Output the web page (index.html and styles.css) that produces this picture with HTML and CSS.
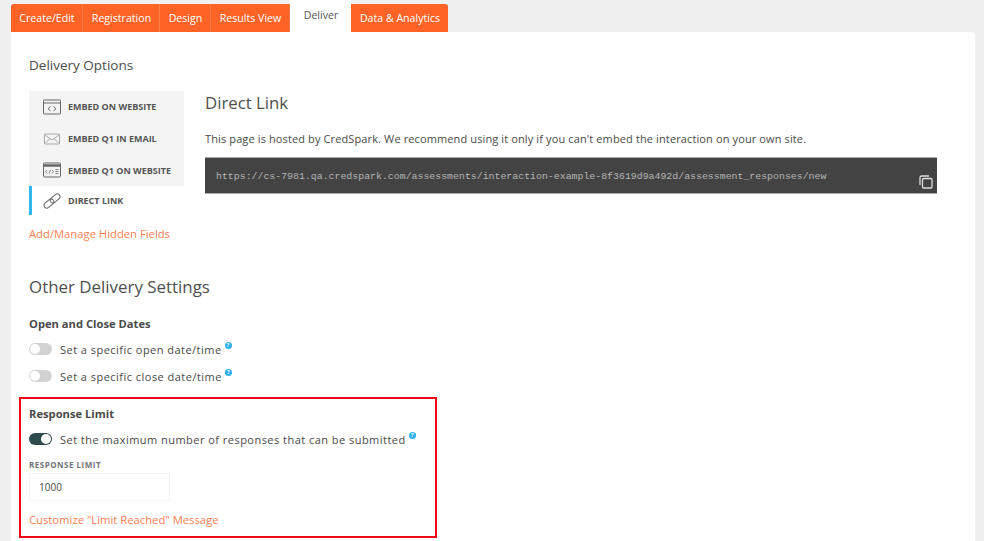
FILE: index.html
```html
<!DOCTYPE html>
<html lang="en">
<head>
    <meta charset="UTF-8">
    <meta name="viewport" content="width=device-width, initial-scale=1.0">
    <title>Deliver</title>
    <link rel="stylesheet" href="styles.css">
</head>
<body>
    <nav class="tabs">
        <a class="tab tab-first" style="width: 72px">Create/Edit</a>
        <a class="tab" style="width: 77px">Registration</a>
        <a class="tab" style="width: 51px">Design</a>
        <a class="tab" style="width: 79px">Results View</a>
        <a class="tab tab-active" style="width: 61px">Deliver</a>
        <a class="tab tab-last" style="width: 97px">Data &amp; Analytics</a>
    </nav>

    <main class="card">
        <h3 class="section-title">Delivery Options</h3>

        <div class="options">
            <div class="side">
                <div class="side-group">
                    <div class="side-item">
                        <svg class="side-icon" width="20" height="16" viewBox="0 0 20 16" fill="none" stroke="#666" stroke-width="1">
                            <rect x="1.5" y="1" width="17" height="14" rx="1"/>
                            <path d="M1.5 4h17M8.5 7.5l-2.5 2.2 2.5 2.2M11.5 7.5l2.5 2.2-2.5 2.2"/>
                        </svg>
                        <span>EMBED ON WEBSITE</span>
                    </div>
                    <div class="side-item">
                        <svg class="side-icon" width="20" height="16" viewBox="0 0 20 16" fill="none" stroke="#a8a8a8" stroke-width="1">
                            <rect x="2.5" y="3" width="15" height="10" rx="1"/>
                            <path d="M3 4l7 5 7-5M3 12.5l5-5M17 12.5l-5-5"/>
                        </svg>
                        <span>EMBED Q1 IN EMAIL</span>
                    </div>
                    <div class="side-item">
                        <svg class="side-icon" width="20" height="16" viewBox="0 0 20 16" fill="none" stroke="#666" stroke-width="1">
                            <rect x="1.5" y="1" width="17" height="14" rx="1"/>
                            <path d="M1.5 3.5h17" stroke-width="2.5"/>
                            <path d="M5 8l-1.5 1.7L5 11.4M7 11.5l1.5-3.5M10 8l1.5 1.7L10 11.4M13.5 7.5h3M13.5 9.5h3M13.5 11.5h3" stroke-width=".8"/>
                        </svg>
                        <span>EMBED Q1 ON WEBSITE</span>
                    </div>
                </div>
                <div class="side-item side-active">
                    <svg class="side-icon" width="20" height="16" viewBox="0 0 20 16" fill="none" stroke="#666" stroke-width="1">
                        <g transform="rotate(-40 10 8)">
                            <rect x="0.5" y="5.2" width="11" height="5.6" rx="2.8"/>
                            <rect x="8.5" y="5.2" width="11" height="5.6" rx="2.8"/>
                        </g>
                    </svg>
                    <span>DIRECT LINK</span>
                </div>
                <a class="link hidden-fields">Add/Manage Hidden Fields</a>
            </div>

            <div class="detail">
                <h2 class="detail-title">Direct Link</h2>
                <p class="detail-text">This page is hosted by CredSpark. We recommend using it only if you can't embed the interaction on your own site.</p>
                <div class="code-box">
                    <code>https://cs-7981.qa.credspark.com/assessments/interaction-example-8f3619d9a492d/assessment_responses/new</code>
                    <svg class="copy-icon" width="14" height="14" viewBox="0 0 14 14" fill="none" stroke="#ddd" stroke-width="1.3">
                        <path d="M1 10V2.5A1.5 1.5 0 0 1 2.5 1H10"/>
                        <rect x="3.5" y="3.5" width="9.5" height="9.5" rx="1"/>
                    </svg>
                </div>
            </div>
        </div>

        <h2 class="other-title">Other Delivery Settings</h2>

        <h4 class="group-title">Open and Close Dates</h4>
        <div class="switch-row">
            <span class="switch"></span>
            <span>Set a specific open date/time</span>
            <span class="help">?</span>
        </div>
        <div class="switch-row">
            <span class="switch"></span>
            <span>Set a specific close date/time</span>
            <span class="help">?</span>
        </div>

        <section class="limit-box">
            <h4 class="group-title limit-title">Response Limit</h4>
            <div class="switch-row">
                <span class="switch switch-on"></span>
                <span>Set the maximum number of responses that can be submitted</span>
                <span class="help">?</span>
            </div>
            <label class="field-label">RESPONSE LIMIT</label>
            <div class="field">1000</div>
            <a class="link">Customize "Limit Reached" Message</a>
        </section>
    </main>
</body>
</html>
```

FILE: styles.css
```css
* {
    box-sizing: border-box;
}
html, body {
    height: 100%;
}
body {
    margin: 0;
    padding: 0 9px 0 11px;
    background-color: #f0f0f0;
    color: #4a4a4a;
    font-family: "Open Sans", Arial, sans-serif;
    overflow: hidden;
}
h2, h3, h4, p {
    margin: 0;
    font-weight: normal;
}
.tabs {
    display: flex;
    align-items: flex-end;
    height: 32px;
}
.tab {
    height: 28px;
    padding-left: 1px;
    background: #ff6326;
    border-right: 1px solid #ff7c48;
    color: #fff;
    font-size: 10.6px;
    line-height: 28px;
    text-align: center;
    white-space: nowrap;
}
.tab-first {
    border-radius: 3px 0 0 0;
}
.tab-last {
    border-right: none;
    border-radius: 0 3px 0 0;
}
.tab-active {
    height: 32px;
    background: #fff;
    border-right: none;
    color: #555;
    line-height: 30px;
}
.card {
    height: 509px;
    padding: 24px 18px 0;
    background: #fff;
    border-radius: 0 4px 0 0;
    overflow: hidden;
}
.section-title {
    font-size: 13.5px;
    line-height: 18px;
    color: #4d4d4d;
}
.options {
    display: flex;
    margin-top: 17px;
}
.side {
    width: 155px;
    flex-shrink: 0;
}
.side-group {
    background: #f4f4f4;
}
.side-item {
    display: flex;
    align-items: center;
    height: 32px;
    padding-left: 13px;
    font-size: 9px;
    font-weight: 700;
    color: #555;
    white-space: nowrap;
}
.side-group .side-item {
    height: 31.7px;
}
.side-icon {
    margin-right: 6px;
    flex-shrink: 0;
}
.side-active {
    height: 29px;
    border-left: 3px solid #2fb8ef;
    padding-left: 10px;
}
.link {
    display: block;
    color: #fb7f55;
    font-size: 11.25px;
    line-height: 16px;
}
.hidden-fields {
    margin-top: 11px;
}
.detail {
    flex: 1;
    margin-left: 21px;
    padding-right: 20px;
}
.detail-title {
    padding-top: 1px;
    font-size: 16.8px;
    line-height: 22px;
    color: #4f4f4f;
}
.detail-text {
    margin-top: 16px;
    font-size: 11px;
    line-height: 17px;
    letter-spacing: .12px;
}
.code-box {
    position: relative;
    height: 37px;
    margin-top: 10px;
    padding: 12px 11px 0;
    background: #434343;
    border: 1px solid #aaa;
    border-width: 1px 0;
}
.code-box code {
    display: block;
    color: #b5b5b5;
    font-family: "Liberation Mono", monospace;
    font-size: 9.9px;
    line-height: 13px;
    white-space: nowrap;
}
.copy-icon {
    position: absolute;
    right: 4px;
    bottom: 4px;
}
.other-title {
    margin-top: 34px;
    font-size: 16.9px;
    line-height: 22px;
    color: #4f4f4f;
}
.group-title {
    margin-top: 18px;
    font-size: 11.2px;
    font-weight: 700;
    line-height: 16px;
}
.switch-row {
    display: flex;
    align-items: center;
    height: 20px;
    margin-top: 7px;
    font-size: 11px;
    letter-spacing: .47px;
}
.switch {
    position: relative;
    width: 23px;
    height: 12px;
    margin-right: 8px;
    background: #d2d2d2;
    border-radius: 6px;
}
.switch::after {
    content: "";
    position: absolute;
    top: 1px;
    left: 1px;
    width: 10px;
    height: 10px;
    background: #fff;
    border-radius: 50%;
}
.switch-on {
    background: #2d4a4d;
}
.switch-on::after {
    left: 12px;
}
.help {
    width: 7px;
    height: 7px;
    margin: -8px 0 0 3px;
    background: #2fb0ea;
    border-radius: 50%;
    color: #fff;
    font-size: 5px;
    font-weight: 700;
    line-height: 7px;
    letter-spacing: 0;
    text-align: center;
}
.limit-box {
    width: 418px;
    height: 141px;
    margin: 11px 0 0 -10px;
    padding: 7px 8px 0;
    border: 2px solid #ee0a14;
}
.limit-title {
    margin-top: 0;
}
.field-label {
    display: block;
    margin-top: 10px;
    color: #6f7478;
    font-size: 8px;
    font-weight: 700;
    line-height: 11px;
    letter-spacing: .5px;
}
.field {
    width: 141px;
    height: 28px;
    margin-top: 3px;
    padding-left: 9px;
    border: 1px solid #f3f3f3;
    font-size: 10px;
    line-height: 26px;
}
.field + .link {
    margin-top: 11px;
}
```
